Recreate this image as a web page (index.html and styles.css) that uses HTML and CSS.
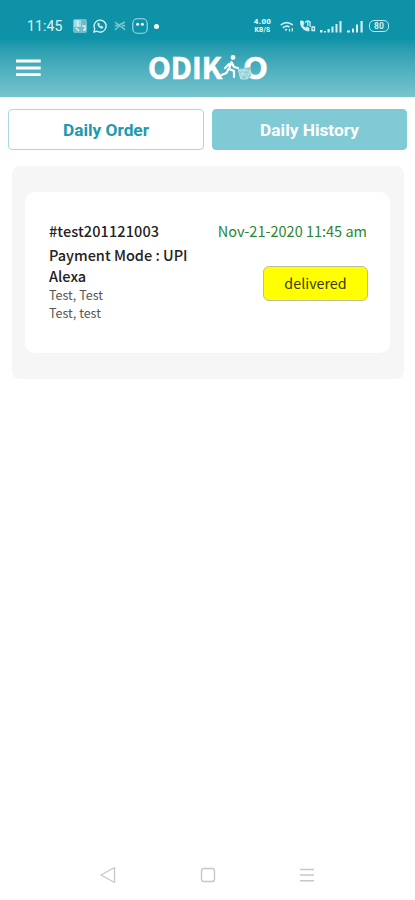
FILE: index.html
```html
<!DOCTYPE html>
<html lang="en">
<head>
<meta charset="utf-8">
<meta name="viewport" content="width=device-width, initial-scale=1">
<title>Daily History</title>
<link rel="stylesheet" href="styles.css">
</head>
<body>
<header class="header">
  <div class="status">
    <div class="status-left">
      <span class="clock">11:45</span>
      <svg class="app" width="14" height="14" viewBox="0 0 14 14"><rect width="14" height="14" rx="2" fill="#6dbdca"/><path d="M1 1h7v7H1z" fill="#a5d8e0"/><path d="M6 2.5H4.5v4h2M9 7h3v4h-2M3 9l3 3" fill="none" stroke="#d5eff3" stroke-width="1.5"/></svg>
      <svg class="whatsapp" width="14" height="14" viewBox="0 0 14 14" fill="none" stroke="#dcf3f6"><path d="M1 13l.7-3.3A6 6 0 1 1 4 12.2z" stroke-width="1.3"/><path d="M4.8 4.2c-.7 2.7 2.2 5.4 4.8 5l.3-1.3-1.6-.8-.8.7-1.5-1.6.6-.8-.7-1.4z" fill="#dcf3f6" stroke-width=".5"/></svg>
      <svg class="mail" width="12" height="10" viewBox="0 0 12 10" fill="none" stroke="#7cc4cf" stroke-width="1.5"><path d="M1 1l4 3 6-3M1 9l4-4 3 1 3 3M1 5l3-1M8 4l3 1"/></svg>
      <svg class="face" width="16" height="16" viewBox="0 0 16 16"><rect x=".8" y=".8" width="14.4" height="14.4" rx="4.5" fill="none" stroke="#a7dce3" stroke-width="1.1"/><circle cx="5.6" cy="6.3" r="1.5" fill="#fff"/><circle cx="10.4" cy="6.3" r="1.5" fill="#fff"/></svg>
      <span class="dot"></span>
    </div>
    <div class="status-right">
      <span class="speed"><b>4.00</b><b class="unit">KB/S</b></span>
      <svg class="wifi" width="14" height="12" viewBox="0 0 14 12" fill="none" stroke="#ccebf0" stroke-width="1.6"><path d="M.7 4.2Q6.5-.8 12.8 4M2.8 6.8Q6.5 4 9.5 6M5 9.3l2-1"/><path d="M9.5 10.5V8M12.3 7v3.5" stroke-width="1.3"/></svg>
      <svg class="call" width="17" height="14" viewBox="0 0 17 14" fill="none" stroke="#d5eff3"><path d="M1.5 2C1 8 5 12 10 12V9L7.5 8 6 9.2 3.7 6 5 5 4 2z" fill="#d5eff3" stroke-width=".8"/><path d="M6 3.5q3-3 5.5 0M8.8 3v4M11 3v5M13 11.5V8h2.5v3.5z" stroke-width="1.3"/></svg>
      <svg class="signal-wide" width="22" height="13" viewBox="0 0 22 13" fill="#d5eff3"><path d="M0 10h2.5v2.5H0zM4 11h2v1.5H4zM7.5 9h2.2v3.5H7.5zM11.5 6.5h2v6h-2zM15.5 4h2v8.5h-2zM19.5 1h2v11.5h-2z"/></svg>
      <svg class="signal" width="17" height="13" viewBox="0 0 17 13" fill="#d5eff3"><path d="M0 10.5h3v2H0zM5 8.5h2v4H5zM9 4.5h2v8H9zM13.5 1h2.2v11.5h-2.2z"/></svg>
      <span class="battery">80</span>
    </div>
  </div>
  <div class="appbar">
    <svg class="menu" width="27" height="18" viewBox="0 0 27 18"><path d="M1 2h24.7M1 9h24.7M1 15.7h24.7" stroke="#fff" stroke-width="2.8"/></svg>
    <svg class="logo" width="122" height="32" viewBox="0 0 122 32">
      <text class="logo-text" x="1" y="27" textLength="74" lengthAdjust="spacingAndGlyphs">ODIK</text>
      <text class="logo-text" x="96" y="27" textLength="25" lengthAdjust="spacingAndGlyphs">O</text>
      <circle cx="86" cy="5.5" r="2.4" fill="#fff"/>
      <path d="M84.5 10l-2.5 7 5 2v6M81.5 17l-2 4-5 2M82 12l-4 4M85 11l2 4 4 1" fill="none" stroke="#fff" stroke-width="2.2" stroke-linecap="round" stroke-linejoin="round"/>
      <path d="M91 17l12-2 1 9-3 3h-8z" fill="#8dcdd5"/>
      <path d="M91 17l3 10h6l3-8-11-1 9 8M98 17l-4 9M92 22h10" fill="none" stroke="#c9edf1" stroke-width=".8"/>
    </svg>
  </div>
</header>
<main class="content">
  <nav class="tabs">
    <button class="tab">Daily Order</button>
    <button class="tab active">Daily History</button>
  </nav>
  <section class="panel">
    <article class="order">
      <div class="details">
        <div class="strong id">#test201121003</div>
        <div class="strong payment">Payment Mode : UPI</div>
        <div class="strong name">Alexa</div>
        <div class="address">Test, Test</div>
        <div class="address">Test, test</div>
      </div>
      <div class="state">
        <time class="date">Nov-21-2020 11:45 am</time>
        <span class="badge">delivered</span>
      </div>
    </article>
  </section>
</main>
<footer class="navbar">
  <svg width="18" height="18" viewBox="0 0 18 18"><path d="M15.5 1.5v15L2 9z"/></svg>
  <svg width="18" height="18" viewBox="0 0 18 18"><rect x="2.5" y="2.5" width="13" height="13" rx="2.5"/></svg>
  <svg width="18" height="18" viewBox="0 0 18 18"><path d="M2 3.5h14M2 9h14M2 14.8h14"/></svg>
</footer>
</body>
</html>
```
FILE: styles.css
```css
* { box-sizing: border-box; }
body {
  margin: 0;
  height: 900px;
  display: flex;
  flex-direction: column;
  background: #fff;
  font-family: "Noto Sans CJK SC", "Noto Sans", sans-serif;
  color: #222;
}
.header {
  height: 97px;
  background: linear-gradient(#0d92a8 0, #0d92a8 38px, #2ca0b1 50px, #4fb0be 70px, #77c4ce 97px);
}
.status {
  height: 52px;
  padding: 0 26px 0 27px;
  display: flex;
  justify-content: space-between;
  align-items: center;
}
.status-left, .status-right { display: flex; align-items: center; }
.clock { font: 400 14px/16px Roboto, sans-serif; color: #e0f4f7; width: 37px; letter-spacing: .1px; white-space: nowrap; }
.app { margin-left: 9px; }
.whatsapp { margin-left: 6px; }
.mail { margin-left: 7px; }
.face { margin-left: 6px; }
.dot { width: 5px; height: 5px; border-radius: 50%; background: #fff; margin-left: 6px; }
.speed { display: flex; flex-direction: column; width: 19px; align-items: center; font: 8px/8px Roboto, sans-serif; color: #d9f2f5; }
.speed b { font-weight: 900; font-size: 8px; letter-spacing: .3px; }
.speed .unit { font-size: 6.5px; line-height: 8px; }
.wifi { margin: 2px 0 0 8px; }
.call { margin-left: 5px; }
.signal-wide { margin-left: 4px; }
.signal { margin-left: 5px; }
.battery {
  width: 20px;
  height: 12px;
  margin-left: 5px;
  border: 1.5px solid #c3e8ed;
  border-radius: 5px;
  font: 700 8.5px/10px Roboto, sans-serif;
  text-align: center;
  color: #d5eff3;
}
.appbar { display: grid; grid-template-columns: 132px 122px; padding-left: 15px; height: 32px; align-items: center; }
.logo { overflow: visible; }
.logo-text { font: 700 30px "Noto Sans CJK SC", "Noto Sans", sans-serif; fill: #fff; stroke: #fff; stroke-width: .6; }
.content { flex: 1; }
.tabs { display: grid; grid-template-columns: 196px 195px; gap: 8px; padding: 12px 8px 0; }
.tab {
  height: 41px;
  padding: 0;
  border: 1.5px solid #a9d9dc;
  border-radius: 4px;
  background: #fff;
  color: #2199ad;
  font: 700 17.3px/38px Roboto, sans-serif;
}
.tab.active { background: #80cad5; border-color: #80cad5; color: #fff; }
.panel { margin: 16px 11px 0 12px; padding: 26px 14px 26px 13px; background: #f6f6f6; border-radius: 8px; height: 213px; }
.order {
  height: 161px;
  background: #fff;
  border-radius: 10px;
  padding: 27px 22px 0 24px;
  display: flex;
  justify-content: space-between;
}
.strong { font-size: 14.5px; font-weight: 500; white-space: nowrap; }
.id { line-height: 24px; letter-spacing: .1px; }
.payment { line-height: 23px; }
.name { line-height: 20px; }
.address { font-size: 12.5px; line-height: 17.5px; color: #555; }
.state { display: flex; flex-direction: column; align-items: flex-end; }
.date { font-size: 14.5px; line-height: 24px; color: #2a862f; white-space: nowrap; margin-right: 1px; }
.badge {
  width: 105px;
  height: 35px;
  margin-top: 23px;
  border: 1.5px solid #bdbd9a;
  border-radius: 6px;
  background: #ff0;
  color: #3a3a00;
  font-size: 14.3px;
  line-height: 32px;
  text-align: center;
}
.navbar { display: flex; justify-content: space-between; height: 50px; padding: 16px 99px 0; }
.navbar svg { fill: none; stroke: #c8c8c8; stroke-width: 1.4; stroke-linejoin: round; }
```
